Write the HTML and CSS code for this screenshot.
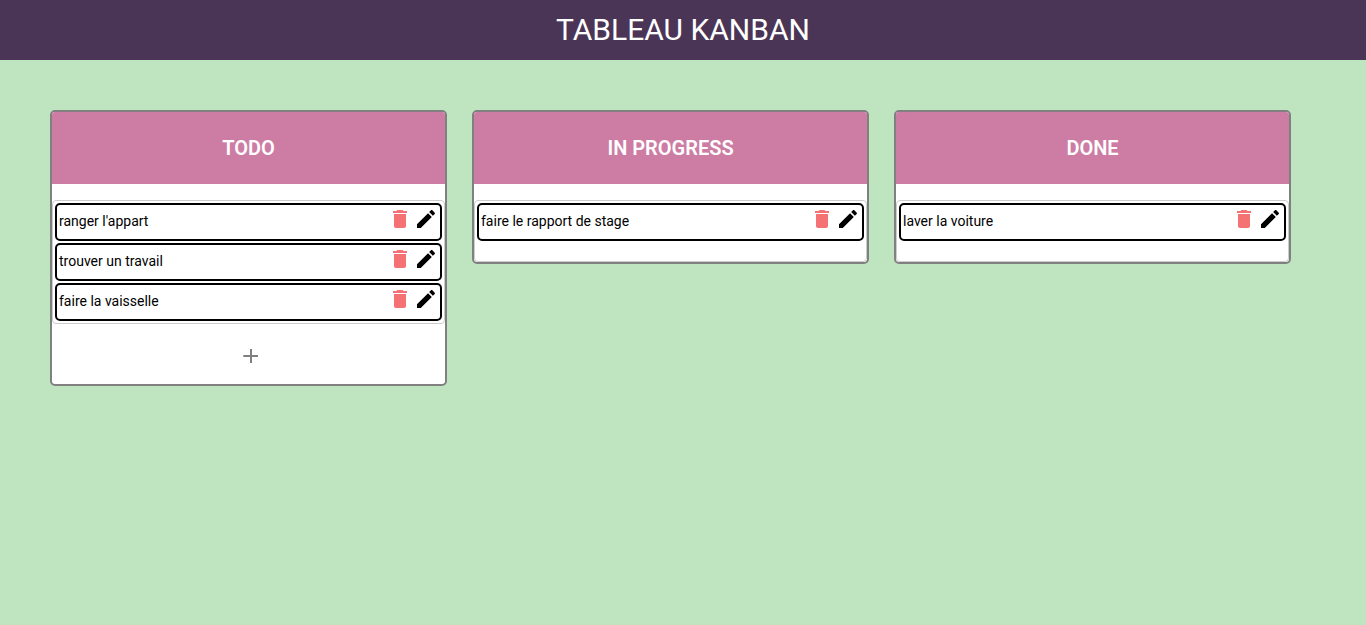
FILE: index.html
```html
<!DOCTYPE html>
<html lang="fr">
<head>
<meta charset="utf-8">
<title>Tableau Kanban</title>
<link rel="stylesheet" href="styles.css">
</head>
<body>
<svg class="sprite" aria-hidden="true">
  <symbol id="trash" viewBox="0 0 24 24"><path d="M6 19c0 1.1.9 2 2 2h8c1.1 0 2-.9 2-2V7H6v12zM19 4h-3.500l-1-1h-5l-1 1H5v2h14V4z"/></symbol>
  <symbol id="pencil" viewBox="0 0 24 24"><path d="M3 17.250V21h3.750L17.810 9.940l-3.750-3.750L3 17.250zM20.710 7.040c.39-.39.39-1.020 0-1.410l-2.340-2.340c-.39-.39-1.020-.39-1.410 0l-1.830 1.830 3.750 3.750 1.830-1.830z"/></symbol>
  <symbol id="plus" viewBox="0 0 24 24"><path d="M19 13h-6v6h-2v-6H4.300v-2H11V5h2v6h6v2z"/></symbol>
</svg>
<header class="topbar"><h1 class="title">TABLEAU KANBAN</h1></header>
<main class="board">
  <section class="column">
    <h2 class="column-title">TODO</h2>
    <ul class="list">
      <li class="task"><span class="task-name">ranger l'appart</span><div class="actions"><button class="icon-button delete" aria-label="Supprimer"><svg class="icon"><use href="#trash"/></svg></button><button class="icon-button" aria-label="Modifier"><svg class="icon"><use href="#pencil"/></svg></button></div></li>
      <li class="task"><span class="task-name">trouver un travail</span><div class="actions"><button class="icon-button delete" aria-label="Supprimer"><svg class="icon"><use href="#trash"/></svg></button><button class="icon-button" aria-label="Modifier"><svg class="icon"><use href="#pencil"/></svg></button></div></li>
      <li class="task"><span class="task-name">faire la vaisselle</span><div class="actions"><button class="icon-button delete" aria-label="Supprimer"><svg class="icon"><use href="#trash"/></svg></button><button class="icon-button" aria-label="Modifier"><svg class="icon"><use href="#pencil"/></svg></button></div></li>
    </ul>
    <div class="column-footer"><button class="icon-button add" aria-label="Ajouter"><svg class="icon"><use href="#plus"/></svg></button></div>
  </section>
  <section class="column">
    <h2 class="column-title">IN PROGRESS</h2>
    <ul class="list">
      <li class="task"><span class="task-name">faire le rapport de stage</span><div class="actions"><button class="icon-button delete" aria-label="Supprimer"><svg class="icon"><use href="#trash"/></svg></button><button class="icon-button" aria-label="Modifier"><svg class="icon"><use href="#pencil"/></svg></button></div></li>
    </ul>
  </section>
  <section class="column">
    <h2 class="column-title">DONE</h2>
    <ul class="list">
      <li class="task"><span class="task-name">laver la voiture</span><div class="actions"><button class="icon-button delete" aria-label="Supprimer"><svg class="icon"><use href="#trash"/></svg></button><button class="icon-button" aria-label="Modifier"><svg class="icon"><use href="#pencil"/></svg></button></div></li>
    </ul>
  </section>
</main>
</body>
</html>
```
FILE: styles.css
```css
* { box-sizing: border-box; }

body {
  margin: 0;
  background: #bfe5c0;
  color: #000;
  font: 14px/20px Roboto, "Liberation Sans", sans-serif;
}

.sprite { display: none; }

.topbar {
  padding: 10px;
  background: #4a3556;
  color: #fff;
  text-align: center;
}

.title {
  margin: 0;
  font-size: 30px;
  font-weight: 400;
  line-height: 40px;
}

.board {
  display: grid;
  grid-template-columns: repeat(3, 1fr);
  align-items: start;
  gap: 25px;
  padding: 50px 75px 50px 50px;
}

.column {
  overflow: hidden;
  border: 2px solid #808080;
  border-radius: 5px;
  background: #fff;
}

.column-title {
  margin: 0 0 16px;
  padding: 26px 0;
  background: #cd7ca4;
  color: #fff;
  font-size: 20px;
  font-weight: 600;
  line-height: 20px;
  text-align: center;
}

.list {
  display: flex;
  flex-direction: column;
  gap: 2px;
  min-height: 62px;
  margin: 0;
  padding: 2px;
  border: 1px solid #ccc;
  border-radius: 4px;
  list-style: none;
}

.task {
  display: flex;
  align-items: flex-start;
  justify-content: space-between;
  min-height: 38px;
  padding: 2px;
  border: 2px solid #000;
  border-radius: 5px;
}

.task-name { line-height: 28px; }

.actions {
  display: flex;
  gap: 2px;
}

.icon-button {
  display: block;
  padding: 0;
  border: 0;
  background: none;
  color: #000;
  cursor: pointer;
}

.delete { color: #f47174; }

.add { color: #808080; }

.icon {
  display: block;
  width: 24px;
  height: 24px;
  fill: currentColor;
}

.column-footer {
  display: flex;
  justify-content: center;
  padding: 20px 0 16px 4px;
}
```
